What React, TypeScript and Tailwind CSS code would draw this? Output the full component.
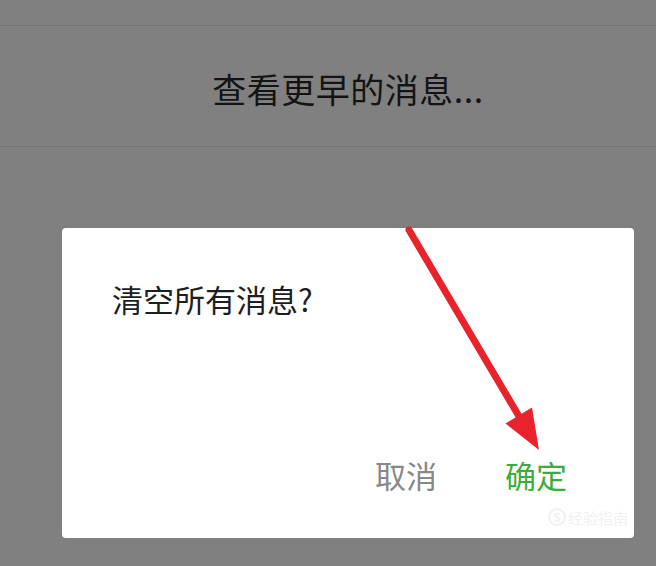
import React from "react";

export default function App() {
  const font = { fontFamily: '"Noto Sans CJK SC", "Noto Sans", sans-serif' };
  return (
    <div className="relative w-[656px] h-[566px] overflow-hidden bg-[#808080]" style={font}>
      <div className="h-[25px]" />
      <div className="h-px bg-[#737373]" />
      <div className="h-[120px] flex items-center justify-center pt-[6px] pl-[40px]">
        <span className="text-[34px] leading-none text-[#141414] tracking-[0.5px]">查看更早的消息...</span>
      </div>
      <div className="h-px bg-[#737373]" />

      <div className="absolute left-[62px] top-[228px] w-[572px] h-[310px] bg-white rounded-[4px] flex flex-col justify-between pl-[50px] pr-[67px] pt-[55px] pb-[48px]">
        <div className="text-[31px] leading-none text-[#1e1e1e]">清空所有消息?</div>
        <div className="flex justify-end items-center gap-[68px]">
          <span className="text-[31px] leading-none text-[#888888]">取消</span>
          <span className="text-[31px] leading-none text-[#3aae3a]">确定</span>
        </div>
        <div className="absolute right-[6px] bottom-[12px] flex items-center gap-[2px] text-[#f0f0f0]">
          <span className="w-[18px] h-[18px] rounded-full border-2 border-[#f0f0f0] flex items-center justify-center text-[12px] leading-none font-bold">S</span>
          <span className="text-[15px] leading-none">经验指南</span>
        </div>
      </div>

      <svg className="absolute left-0 top-0" width="656" height="566" viewBox="0 0 656 566">
        <line x1="409" y1="230" x2="520" y2="418" stroke="#e8232b" strokeWidth="7" strokeLinecap="round" />
        <polygon points="539,450 505.5,423.5 532,407.5" fill="#e8232b" />
      </svg>
    </div>
  );
}
